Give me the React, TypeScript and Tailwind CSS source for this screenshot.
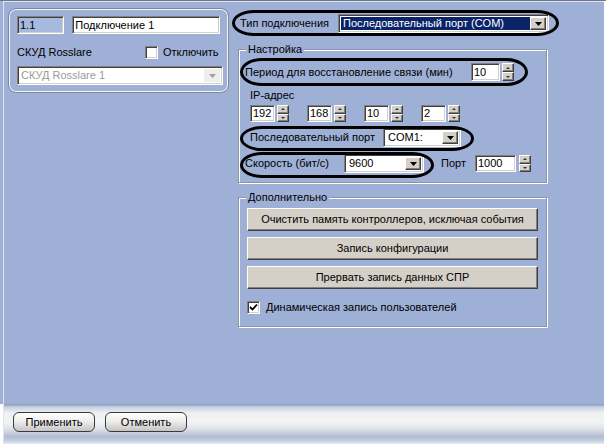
import React from "react";

const sunken =
  "border border-t-[#808080] border-l-[#808080] border-b-white border-r-white shadow-[inset_1px_1px_0_#404040,inset_-1px_-1px_0_#d4d0c8]";
const raised =
  "bg-[#d4d0c8] border border-t-white border-l-white border-b-[#404040] border-r-[#404040] shadow-[inset_-1px_-1px_0_#808080]";

function Tri({ up, color = "#000", w = 7, h = 4 }: { up?: boolean; color?: string; w?: number; h?: number }) {
  return (
    <svg width={w} height={h} viewBox={`0 0 ${w} ${h}`}>
      <polygon points={up ? `0,${h} ${w / 2},0 ${w},${h}` : `0,0 ${w},0 ${w / 2},${h}`} fill={color} />
    </svg>
  );
}

function Spin({ h = "h-[18px]" }: { h?: string }) {
  return (
    <div className={`flex flex-col w-[12px] ${h}`}>
      <div className={`flex-1 flex items-center justify-center ${raised}`}>
        <Tri up w={4} h={2} color="#333" />
      </div>
      <div className={`flex-1 flex items-center justify-center ${raised}`}>
        <Tri w={4} h={2} color="#333" />
      </div>
    </div>
  );
}

function DropBtn({ disabled }: { disabled?: boolean }) {
  return (
    <div
      className={`w-[16px] h-full flex items-center justify-center ${
        disabled ? "bg-[#eeeeee]" : raised
      }`}
    >
      <Tri color={disabled ? "#a0a0a0" : "#000"} />
    </div>
  );
}

function Combo({ w, value, selected }: { w: string; value: string; selected?: boolean }) {
  return (
    <div className={`flex items-stretch h-[19px] bg-white p-[2px] ${w} ${sunken}`}>
      <div className={`flex-1 flex items-center px-[2px] ${selected ? "bg-[#0a246a] text-white" : ""}`}>
        {value}
      </div>
      <DropBtn />
    </div>
  );
}

function Group({ title, className, children }: { title: string; className: string; children: React.ReactNode }) {
  return (
    <div
      className={`relative w-[309px] border border-[#8a93a8] shadow-[1px_1px_0_#ffffff,inset_1px_1px_0_#ffffff] ${className}`}
    >
      <div className="absolute -top-[8px] left-[7px] px-[2px] bg-[#9eb0d6] leading-[14px]">{title}</div>
      {children}
    </div>
  );
}

function WinBtn({ children }: { children: React.ReactNode }) {
  return (
    <div className={`h-[23px] w-[291px] flex items-center justify-center ${raised}`}>{children}</div>
  );
}

function Ellipse({ className }: { className: string }) {
  return <div className={`absolute border-[3px] border-black rounded-[22px/50%] pointer-events-none ${className}`} />;
}

export default function App() {
  return (
    <div className="relative w-[606px] h-[444px] overflow-hidden bg-[#9eb0d6] font-['Liberation_Sans',Arial,sans-serif] text-[11px] text-black">
      <div className="flex flex-col h-full border-t border-[#6e778a] pr-[2px] bg-white">
        <div className="flex-1 flex flex-col bg-[#9eb0d6] pl-[3px]">
          <div className="flex-1 flex border-l border-t border-[#dde4f0]">
            {/* left panel */}
            <div className="ml-[4px] mt-[6px] w-[221px] h-[85px] rounded-[8px] border border-[#7d879b] shadow-[inset_0_0_0_1px_#f4f6fa] px-[8px] pt-[7px]">
              <div className="flex gap-[8px] h-[18px]">
                <div className={`w-[48px] flex items-center px-[2px] bg-[#a7b9de] ${sunken}`}>1.1</div>
                <div className={`w-[150px] flex items-center px-[2px] bg-white ${sunken}`}>Подключение 1</div>
              </div>
              <div className="flex items-center h-[12px] mt-[12px]">
                <span className="w-[128px]">СКУД Rosslare</span>
                <div className={`w-[13px] h-[13px] bg-white ${sunken}`} />
                <span className="ml-[5px]">Отключить</span>
              </div>
              <div className={`flex items-stretch h-[19px] mt-[8px] w-[206px] bg-white p-[2px] ${sunken}`}>
                <div className="flex-1 flex items-center px-[1px] text-[#9a9a9a]">СКУД Rosslare 1</div>
                <DropBtn disabled />
              </div>
            </div>

            {/* right column */}
            <div className="ml-[9px] w-[312px] flex flex-col">
              <div className="flex items-center h-[19px] mt-[12px] pl-[2px]">
                <span className="w-[98px]">Тип подключения</span>
                <Combo w="w-[211px]" value="Последовательный порт (COM)" selected />
              </div>

              <Group title="Настройка" className="mt-[16px] h-[134px] pt-[13px]">
                <div className="flex items-center h-[18px] pl-[6px]">
                  <span className="w-[226px]">Период для восстановление связи (мин)</span>
                  <div className={`w-[29px] h-[18px] flex items-center px-[2px] bg-white ${sunken}`}>10</div>
                  <div className="ml-[2px]">
                    <Spin />
                  </div>
                </div>
                <div className="pl-[11px] mt-[7px] leading-[14px]">IP-адрес</div>
                <div className="flex pl-[11px] mt-[3px] gap-[18px]">
                  {["192", "168", "10", "2"].map((v) => (
                    <div key={v} className="flex gap-[2px]">
                      <div className={`w-[25px] h-[17px] flex items-center px-[2px] bg-white ${sunken}`}>{v}</div>
                      <Spin h="h-[17px]" />
                    </div>
                  ))}
                </div>
                <div className="flex items-center h-[19px] pl-[11px] mt-[6px]">
                  <span className="w-[133px]">Последовательный порт</span>
                  <Combo w="w-[78px]" value="COM1:" />
                </div>
                <div className="flex items-center h-[19px] pl-[6px] mt-[7px]">
                  <span className="w-[99px]">Скорость (бит/с)</span>
                  <Combo w="w-[80px]" value="9600" />
                  <span className="ml-[17px] w-[34px]">Порт</span>
                  <div className={`w-[41px] h-[17px] flex items-center px-[2px] bg-white ${sunken}`}>1000</div>
                  <div className="ml-[3px]">
                    <Spin h="h-[17px]" />
                  </div>
                </div>
              </Group>

              <Group title="Дополнительно" className="mt-[14px] h-[130px] pt-[10px] pl-[8px]">
                <div className="flex flex-col gap-[6px]">
                  <WinBtn>Очистить память контроллеров, исключая события</WinBtn>
                  <WinBtn>Запись конфигурации</WinBtn>
                  <WinBtn>Прервать запись данных СПР</WinBtn>
                </div>
                <div className="flex items-center mt-[10px]">
                  <div className={`w-[13px] h-[13px] bg-white flex items-center justify-center ${sunken}`}>
                    <svg width="9" height="8" viewBox="0 0 9 8">
                      <path d="M1 4 L3.5 6.5 L8 1.5" stroke="#000" strokeWidth="1.8" fill="none" />
                    </svg>
                  </div>
                  <span className="ml-[6px]">Динамическая запись пользователей</span>
                </div>
              </Group>
            </div>
          </div>
        </div>

        {/* bottom bar */}
        <div className="h-[40px] ml-[3px] border-l border-[#dde4f0] bg-[linear-gradient(to_bottom,#8797b8_0%,#c9d2e2_8%,#eef0f3_22%,#f3f3f3_45%,#dfe3ea_62%,#b2bcd0_82%,#c6d0e2_92%,#e6ecf5_100%)] flex items-start pt-[8px] pl-[9px] gap-[10px]">
          {["Применить", "Отменить"].map((t) => (
            <div
              key={t}
              className="w-[82px] h-[20px] rounded-[6px] border border-[#3a3a3a] bg-[linear-gradient(to_bottom,#ffffff_0%,#eeeeee_45%,#c4c4c4_100%)] flex items-center justify-center text-[11px]"
            >
              {t}
            </div>
          ))}
        </div>
      </div>

      <Ellipse className="left-[232px] top-[10px] w-[327px] h-[26px]" />
      <Ellipse className="left-[240px] top-[58px] w-[288px] h-[28px]" />
      <Ellipse className="left-[240px] top-[126px] w-[234px] h-[25px]" />
      <Ellipse className="left-[240px] top-[152px] w-[194px] h-[26px]" />
    </div>
  );
}
